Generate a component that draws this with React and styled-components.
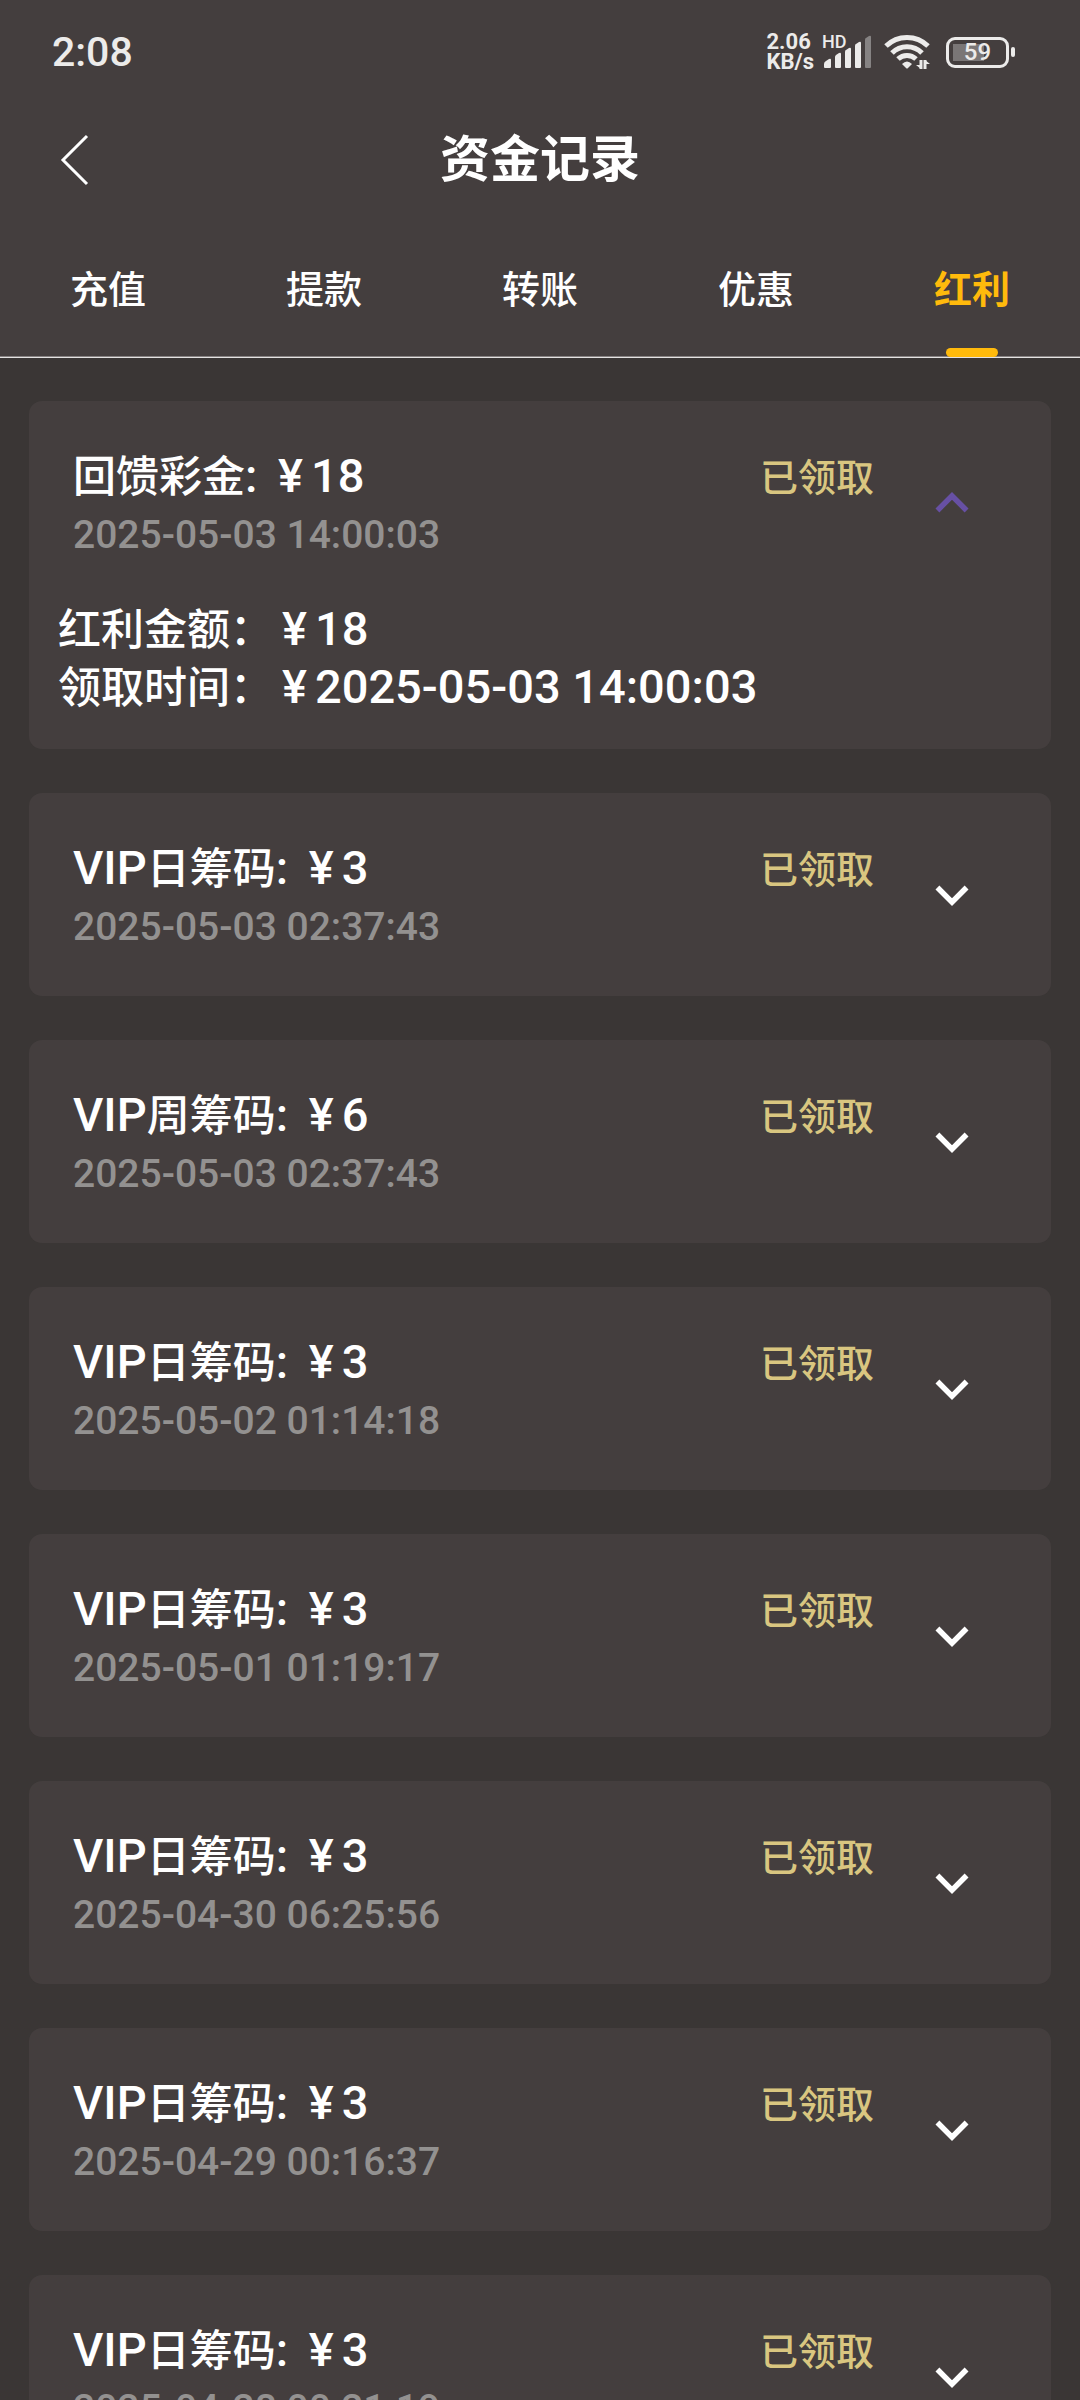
import React, { useState } from "react";
import styled, { createGlobalStyle } from "styled-components";
import { MdExpandLess, MdExpandMore } from "react-icons/md";

const GlobalStyle = createGlobalStyle`
  * {
    box-sizing: border-box;
  }

  body {
    margin: 0;
    background-color: #3a3635;
    color: #fff;
    font-family: Roboto, "Noto Sans CJK SC", sans-serif;
    font-weight: 500;
  }

  #root {
    height: 100vh;
    overflow: hidden;
  }

  button {
    border: 0;
    padding: 0;
    background: none;
    color: inherit;
    font: inherit;
    cursor: pointer;
  }
`;

const Header = styled.header`
  background-color: #443e3e;
`;

const StatusBar = styled.div`
  display: flex;
  align-items: center;
  justify-content: space-between;
  height: 104px;
  padding: 0 65px 0 52px;
  color: #ecebea;
`;

const Clock = styled.time`
  font-size: 41px;
  line-height: 48px;
`;

const StatusIcons = styled.div`
  display: flex;
  align-items: center;
`;

const Speed = styled.div`
  margin-right: 8px;
  font-size: 22px;
  font-weight: 700;
  line-height: 20px;
`;

const Signal = styled.div`
  position: relative;
  height: 34px;
  margin-right: 12px;
`;

const SignalLabel = styled.span`
  position: absolute;
  top: 0;
  left: 0;
  font-size: 18px;
  line-height: 14px;
`;

const Battery = styled.div`
  position: relative;
  display: flex;
  align-items: center;
  justify-content: center;
  width: 63px;
  height: 31px;
  margin: 0 6px 0 16px;
  border: 3px solid #ecebea;
  border-radius: 9px;
  background: linear-gradient(#7a7676, #7a7676) 4px 4px / 31px 17px no-repeat;
  font-size: 24px;
  line-height: 24px;

  &::after {
    content: "";
    position: absolute;
    right: -9px;
    width: 4px;
    height: 10px;
    border-radius: 2px;
    background-color: #ecebea;
  }
`;

const NavBar = styled.div`
  display: grid;
  grid-template-columns: 1fr auto 1fr;
  align-items: center;
  height: 110px;
  padding: 2px 58px 0;
`;

const BackButton = styled.button`
  display: flex;
  justify-self: start;
`;

const PageTitle = styled.h1`
  margin: 0;
  font-size: 50px;
  font-weight: 700;
  line-height: 60px;
`;

const Tabs = styled.nav`
  display: flex;
  border-bottom: 1px solid #e4e2e2;
  box-shadow: inset 0 -1px #868181;
`;

const Tab = styled.button`
  position: relative;
  flex: 1;
  padding: 50px 0 41px;
  color: ${(props) => (props.$active ? "#ffba0c" : "#fff")};
  font-size: 38px;
  font-weight: ${(props) => (props.$active ? 700 : 500)};
  line-height: 52px;
`;

const TabBar = styled.span`
  position: absolute;
  bottom: 0;
  left: 50%;
  width: 52px;
  height: 9px;
  margin-left: -26px;
  border-radius: 5px;
  background-color: #ffba0c;
`;

const List = styled.main`
  display: flex;
  flex-direction: column;
  gap: 44px;
  padding: 43px 29px;
`;

const Card = styled.section`
  padding-bottom: ${(props) => (props.$open ? "32px" : "3px")};
  border-radius: 13px;
  background-color: #443e3e;
`;

const CardHead = styled.button`
  display: flex;
  align-items: flex-start;
  width: 100%;
  padding: 47px 66px 37px 44px;
  text-align: left;
`;

const CardText = styled.span`
  display: flex;
  flex: 1;
  flex-direction: column;
`;

const CardTitle = styled.span`
  font-size: 43px;
  line-height: 58px;
`;

const CardDate = styled.span`
  color: #939190;
  font-size: 39px;
  line-height: 58px;
`;

const Latin = styled.span`
  font-size: 47px;
  line-height: 1;
`;

const Yen = styled(Latin)`
  margin: 0 8px 0 9px;
`;

const State = styled.span`
  margin-right: 45px;
  color: #d9c680;
  font-size: 38px;
  line-height: 60px;
`;

const Arrow = styled.span`
  display: flex;
  margin-top: 22px;
  color: ${(props) => (props.$open ? "#6750a4" : "#fff")};
  font-size: 66px;
`;

const Details = styled.div`
  padding: 0 29px;
  font-size: 43px;
  line-height: 58px;
`;

const records = [
  { name: "回馈彩金", amount: "18", date: "2025-05-03 14:00:03" },
  { prefix: "VIP", name: "日筹码", amount: "3", date: "2025-05-03 02:37:43" },
  { prefix: "VIP", name: "周筹码", amount: "6", date: "2025-05-03 02:37:43" },
  { prefix: "VIP", name: "日筹码", amount: "3", date: "2025-05-02 01:14:18" },
  { prefix: "VIP", name: "日筹码", amount: "3", date: "2025-05-01 01:19:17" },
  { prefix: "VIP", name: "日筹码", amount: "3", date: "2025-04-30 06:25:56" },
  { prefix: "VIP", name: "日筹码", amount: "3", date: "2025-04-29 00:16:37" },
  { prefix: "VIP", name: "日筹码", amount: "3", date: "2025-04-28 00:21:19" },
];

const tabs = ["充值", "提款", "转账", "优惠", "红利"];

const SignalIcon = () => (
  <svg width="50" height="34" viewBox="0 0 50 34" fill="currentColor">
    <path d="M2 32v-3q0-2 2-3l3-2q2-1 2 1v7q0 1-1 1H3q-1 0-1-1z" />
    <path d="M13 32V22q0-1 1-2l3-2q2-1 2 1v13q0 1-1 1h-4q-1 0-1-1z" />
    <path d="M23 32V17q0-2 1-2l3-2q2-1 2 1v18q0 1-1 1h-4q-1 0-1-1z" />
    <path d="M33 32V11q0-2 1-2l3-2q2-1 2 1v24q0 1-1 1h-4q-1 0-1-1z" />
    <path d="M43 32V5q0-2 1-2l3-2q2-1 2 1v30q0 1-1 1h-4q-1 0-1-1z" opacity="0.4" />
  </svg>
);

const WifiIcon = () => (
  <svg width="46" height="36" viewBox="0 0 46 36" fill="none" stroke="currentColor">
    <path d="M2 12a30 30 0 0 1 42 0" strokeWidth="5" />
    <path d="M8 19a21 21 0 0 1 30 0" strokeWidth="5" />
    <path d="M14 25a13 13 0 0 1 18 0" strokeWidth="5" />
    <path d="M18 30q5-5 10 0l-4 4q-1 1-2 0z" fill="currentColor" stroke="none" />
    <path d="M37 26v9M41 35v-9" strokeWidth="3" />
    <path d="M32 31h5v4zM46 30h-5v-4z" fill="currentColor" stroke="none" />
  </svg>
);

const Record = ({ record, defaultOpen }) => {
  const [open, setOpen] = useState(defaultOpen);

  return (
    <Card $open={open}>
      <CardHead aria-expanded={open} onClick={() => setOpen(!open)}>
        <CardText>
          <CardTitle>
            {record.prefix && <Latin>{record.prefix}</Latin>}
            {record.name}
            <Latin>: </Latin>
            <Yen>¥</Yen>
            <Latin>{record.amount}</Latin>
          </CardTitle>
          <CardDate>{record.date}</CardDate>
        </CardText>
        <State>已领取</State>
        <Arrow $open={open}>{open ? <MdExpandLess /> : <MdExpandMore />}</Arrow>
      </CardHead>
      {open && (
        <Details>
          <div>
            红利金额：<Yen>¥</Yen>
            <Latin>{record.amount}</Latin>
          </div>
          <div>
            领取时间：<Yen>¥</Yen>
            <Latin>{record.date}</Latin>
          </div>
        </Details>
      )}
    </Card>
  );
};

const App = () => {
  const [active, setActive] = useState("红利");

  return (
    <>
      <GlobalStyle />
      <Header>
        <StatusBar>
          <Clock>2:08</Clock>
          <StatusIcons>
            <Speed>
              2.06
              <br />
              KB/s
            </Speed>
            <Signal>
              <SignalLabel>HD</SignalLabel>
              <SignalIcon />
            </Signal>
            <WifiIcon />
            <Battery>59</Battery>
          </StatusIcons>
        </StatusBar>
        <NavBar>
          <BackButton aria-label="返回">
            <svg width="32" height="52" viewBox="0 0 32 52" fill="none">
              <path d="M29 2L5 26l24 24" stroke="#fff" strokeWidth="3" />
            </svg>
          </BackButton>
          <PageTitle>资金记录</PageTitle>
        </NavBar>
        <Tabs>
          {tabs.map((tab) => (
            <Tab key={tab} $active={tab === active} onClick={() => setActive(tab)}>
              {tab}
              {tab === active && <TabBar />}
            </Tab>
          ))}
        </Tabs>
      </Header>
      <List>
        {records.map((record, index) => (
          <Record key={index} record={record} defaultOpen={index === 0} />
        ))}
      </List>
    </>
  );
};

export default App;
